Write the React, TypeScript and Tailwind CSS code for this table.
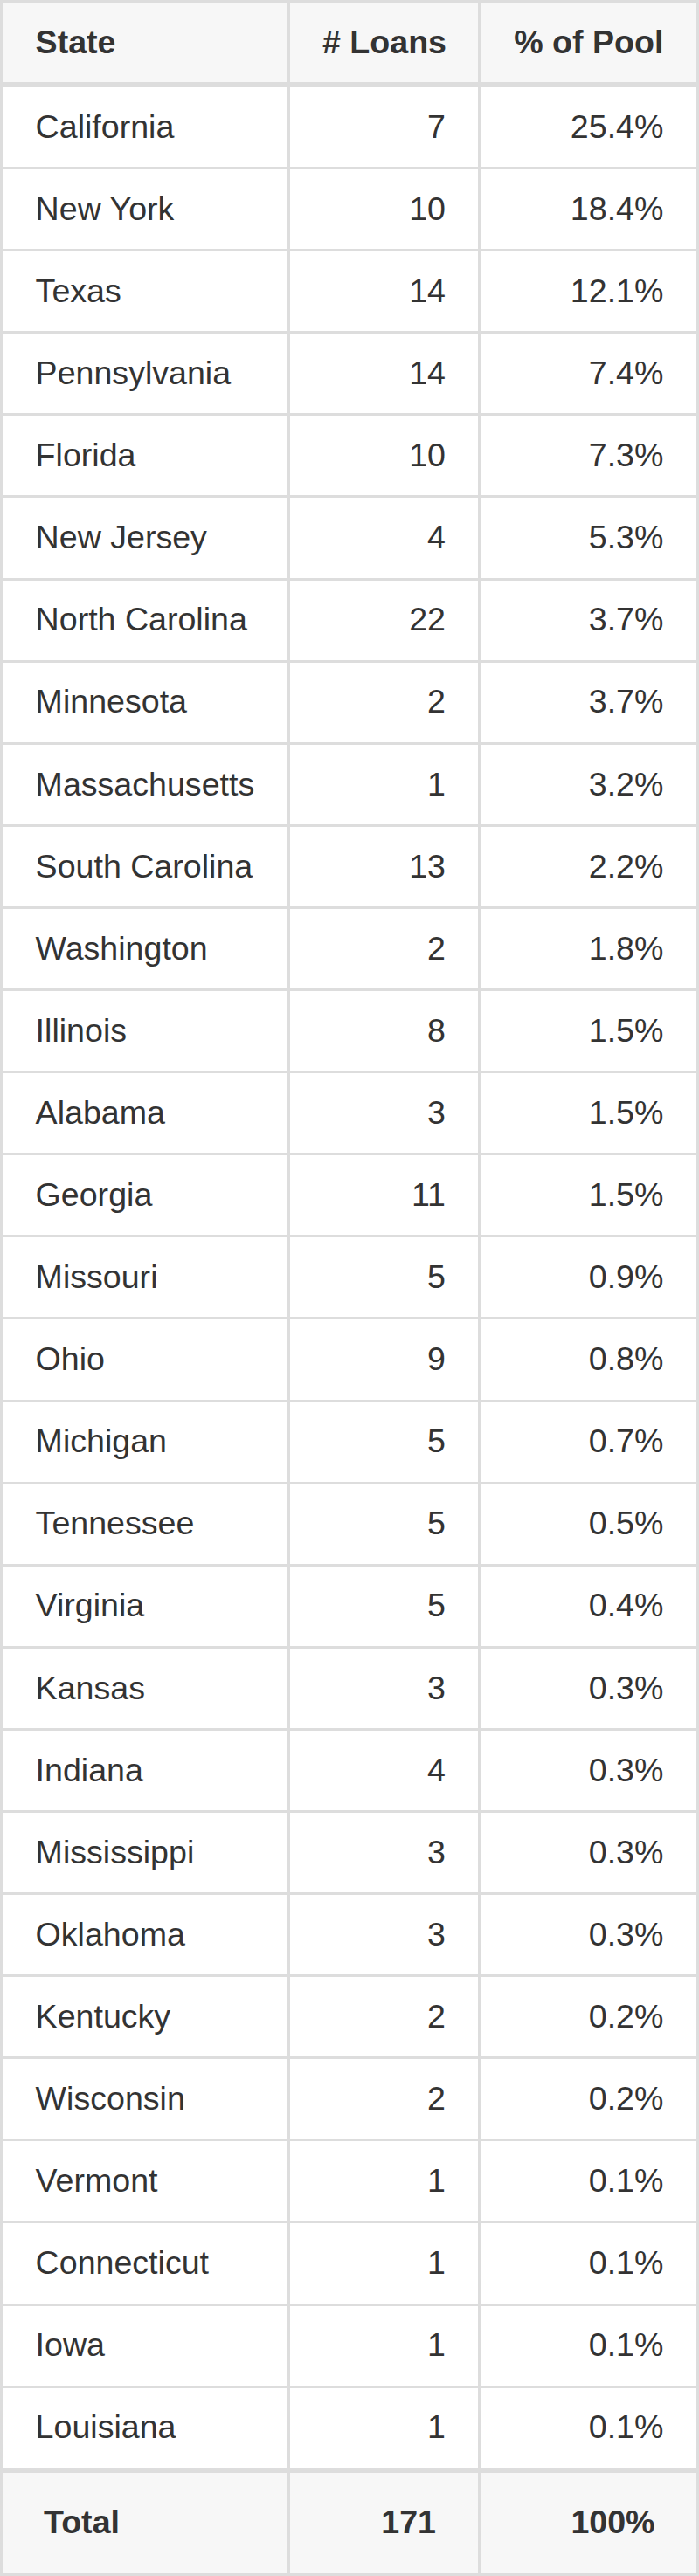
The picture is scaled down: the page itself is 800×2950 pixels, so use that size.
const rows: [string, string, string][] = [
  ["California", "7", "25.4%"],
  ["New York", "10", "18.4%"],
  ["Texas", "14", "12.1%"],
  ["Pennsylvania", "14", "7.4%"],
  ["Florida", "10", "7.3%"],
  ["New Jersey", "4", "5.3%"],
  ["North Carolina", "22", "3.7%"],
  ["Minnesota", "2", "3.7%"],
  ["Massachusetts", "1", "3.2%"],
  ["South Carolina", "13", "2.2%"],
  ["Washington", "2", "1.8%"],
  ["Illinois", "8", "1.5%"],
  ["Alabama", "3", "1.5%"],
  ["Georgia", "11", "1.5%"],
  ["Missouri", "5", "0.9%"],
  ["Ohio", "9", "0.8%"],
  ["Michigan", "5", "0.7%"],
  ["Tennessee", "5", "0.5%"],
  ["Virginia", "5", "0.4%"],
  ["Kansas", "3", "0.3%"],
  ["Indiana", "4", "0.3%"],
  ["Mississippi", "3", "0.3%"],
  ["Oklahoma", "3", "0.3%"],
  ["Kentucky", "2", "0.2%"],
  ["Wisconsin", "2", "0.2%"],
  ["Vermont", "1", "0.1%"],
  ["Connecticut", "1", "0.1%"],
  ["Iowa", "1", "0.1%"],
  ["Louisiana", "1", "0.1%"],
];

const grid = "grid grid-cols-[326px_215px_247px] gap-[3px]";

export default function App() {
  return (
    <div className="w-[800px] bg-[#dddddd] p-[3px] flex flex-col gap-[3px] text-[#333333] text-[37.6px] leading-none whitespace-nowrap [font-family:'Liberation_Sans',Arial,sans-serif]">
      {/* header */}
      <div className={`${grid} h-[91px] mb-[3px] font-bold`}>
        <div className="bg-[#f7f7f7] flex items-center px-[37.6px]">State</div>
        <div className="bg-[#f7f7f7] flex items-center justify-end pl-[20px] pr-[36px]">
          # Loans
        </div>
        <div className="bg-[#f7f7f7] flex items-center justify-end px-[37.6px]">
          % of Pool
        </div>
      </div>

      {rows.map(([state, loans, pct]) => (
        <div key={state} className={`${grid} h-[91.1px]`}>
          <div className="bg-white flex items-center px-[37.6px]">{state}</div>
          <div className="bg-white flex items-center justify-end px-[37px]">{loans}</div>
          <div className="bg-white flex items-center justify-end px-[37.6px]">{pct}</div>
        </div>
      ))}

      {/* total */}
      <div className={`${grid} h-[115px] mt-[3px] font-bold`}>
        <div className="bg-[#f7f7f7] flex items-center px-[47px]">Total</div>
        <div className="bg-[#f7f7f7] flex items-center justify-end px-[48px]">171</div>
        <div className="bg-[#f7f7f7] flex items-center justify-end px-[47.5px]">100%</div>
      </div>
    </div>
  );
}
